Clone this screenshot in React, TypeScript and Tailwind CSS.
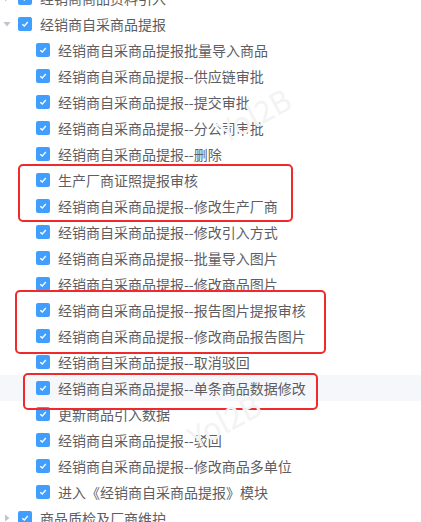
import React from "react";

type Node = { label: string; level: 1 | 2; caret?: "down" | "right"; hover?: boolean };

const P = "经销商自采商品提报--";

const head: Node[] = [
  { label: "经销商商品资料引入", level: 1, caret: "right" },
  { label: "经销商自采商品提报", level: 1, caret: "down" },
  { label: "经销商自采商品提报批量导入商品", level: 2 },
  { label: P + "供应链审批", level: 2 },
  { label: P + "提交审批", level: 2 },
  { label: P + "分公司审批", level: 2 },
  { label: P + "删除", level: 2 },
];

const box1: Node[] = [
  { label: "生产厂商证照提报审核", level: 2 },
  { label: P + "修改生产厂商", level: 2 },
];

const mid: Node[] = [
  { label: P + "修改引入方式", level: 2 },
  { label: P + "批量导入图片", level: 2 },
  { label: P + "修改商品图片", level: 2 },
];

const box2: Node[] = [
  { label: P + "报告图片提报审核", level: 2 },
  { label: P + "修改商品报告图片", level: 2 },
];

const mid2: Node[] = [{ label: P + "取消驳回", level: 2 }];

const box3: Node[] = [{ label: P + "单条商品数据修改", level: 2, hover: true }];

const tail: Node[] = [
  { label: "更新商品引入数据", level: 2 },
  { label: P + "驳回", level: 2 },
  { label: P + "修改商品多单位", level: 2 },
  { label: "进入《经销商自采商品提报》模块", level: 2 },
  { label: "商品质检及厂商维护", level: 1, caret: "right" },
];

function Caret({ dir }: { dir: "down" | "right" }) {
  return (
    <svg width="8" height="8" viewBox="0 0 8 8" className="ml-[3px]">
      {dir === "down" ? (
        <path d="M0.5 2 L7.5 2 L4 6.5 Z" fill="#c0c4cc" />
      ) : (
        <path d="M2 0.5 L6.5 4 L2 7.5 Z" fill="#c0c4cc" />
      )}
    </svg>
  );
}

function Checkbox() {
  return (
    <span className="flex h-[14px] w-[14px] shrink-0 items-center justify-center rounded-[2px] bg-[#409eff]">
      <svg width="10" height="10" viewBox="0 0 10 10">
        <path d="M2.3 5.2 L4.3 7 L7.8 3" fill="none" stroke="#fff" strokeWidth="1.3" />
      </svg>
    </span>
  );
}

function Row({ node }: { node: Node }) {
  return (
    <div className={"flex h-[26px] items-center " + (node.hover ? "bg-[#f5f7fa]" : "")}>
      <span className={"flex shrink-0 items-center " + (node.level === 1 ? "w-[18px]" : "w-[36px]")}>
        {node.caret && <Caret dir={node.caret} />}
      </span>
      <Checkbox />
      <span className="ml-2 whitespace-nowrap text-[14px] text-[#5c5e63]">{node.label}</span>
    </div>
  );
}

function Rows({ items }: { items: Node[] }) {
  return (
    <>
      {items.map((n, i) => (
        <Row key={i} node={n} />
      ))}
    </>
  );
}

export default function App() {
  return (
    <div
      className="relative h-[522px] w-[421px] overflow-hidden bg-white"
      style={{ fontFamily: '"Noto Sans CJK SC", "Noto Sans", sans-serif' }}
    >
      <div className="mt-[-15px] flex flex-col">
        <Rows items={head} />
        <div className="relative">
          <Rows items={box1} />
          <div className="pointer-events-none absolute -top-[3px] -bottom-[3px] left-[18px] w-[275px] rounded-[5px] border-2 border-[#f02a2a]" />
        </div>
        <Rows items={mid} />
        <div className="relative">
          <Rows items={box2} />
          <div className="pointer-events-none absolute -top-[7px] -bottom-[5px] left-[15px] w-[311px] rounded-[5px] border-2 border-[#f02a2a]" />
        </div>
        <Rows items={mid2} />
        <div className="relative">
          <Rows items={box3} />
          <div className="pointer-events-none absolute -top-[2px] -bottom-[9px] left-[23px] w-[295px] rounded-[5px] border-2 border-[#f02a2a]" />
        </div>
        <Rows items={tail} />
      </div>

      <div className="pointer-events-none absolute left-[215px] top-[92px] -rotate-[28deg] text-[30px] text-[#f3f3f3]">
        Yol2B
      </div>
      <div className="pointer-events-none absolute left-[185px] top-[398px] -rotate-[28deg] text-[30px] text-[#f3f3f3]">
        Yol2B
      </div>
    </div>
  );
}
